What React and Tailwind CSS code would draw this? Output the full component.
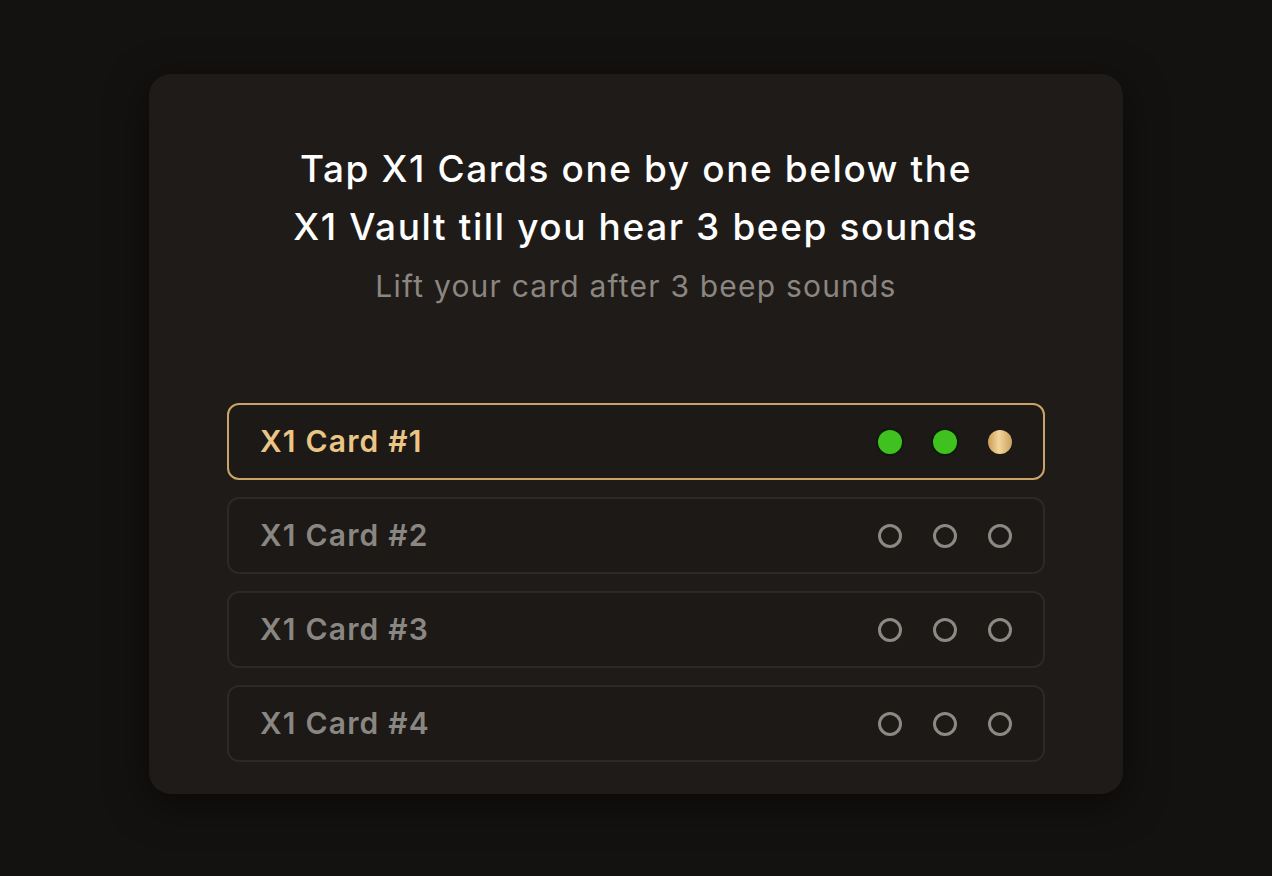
export default function App() {
  const cards = [
    { name: "X1 Card #1", active: true, dots: ["green", "green", "gold"] },
    { name: "X1 Card #2", active: false, dots: ["empty", "empty", "empty"] },
    { name: "X1 Card #3", active: false, dots: ["empty", "empty", "empty"] },
    { name: "X1 Card #4", active: false, dots: ["empty", "empty", "empty"] },
  ];

  const Dot = ({ kind }) => {
    if (kind === "green")
      return <span className="block h-[24px] w-[24px] rounded-full bg-[#3fc21f] shadow-[0_0_0_2px_#0f1a0a]" />;
    if (kind === "gold")
      return <span className="block h-[24px] w-[24px] rounded-full bg-[linear-gradient(90deg,#c99b55,#f3d59a_45%,#caa060)]" />;
    return <span className="block h-[24px] w-[24px] rounded-full border-[3px] border-[#8c8884]" />;
  };

  return (
    <div className="flex min-h-[876px] w-full items-start justify-center bg-[#141210] pt-[74px] font-['Inter',sans-serif]">
      <div className="flex h-[720px] w-[974px] flex-col items-center rounded-[22px] bg-[#1f1b18] shadow-[0_10px_40px_rgba(0,0,0,0.5)]">
        <div className="mt-[66px] flex flex-col items-center text-center">
          <p className="text-[37px] font-medium leading-[58px] tracking-[1.6px] text-white">
            Tap X1 Cards one by one below the
            <br />
            X1 Vault till you hear 3 beep sounds
          </p>
          <p className="mt-[10px] text-[30px] leading-[40px] tracking-[1.2px] text-[#8b8680]">
            Lift your card after 3 beep sounds
          </p>
        </div>
        <div className="mt-[97px] flex w-[818px] flex-col gap-[17px]">
          {cards.map((c) => (
            <div
              key={c.name}
              className={
                c.active
                  ? "flex h-[77px] items-center justify-between rounded-[12px] border-2 border-[#c9a466] bg-[#1c1916] pl-[31px] pr-[31px]"
                  : "flex h-[77px] items-center justify-between rounded-[12px] border-2 border-[#2c2926] bg-[#1c1916] pl-[31px] pr-[31px]"
              }
            >
              <span
                className={
                  c.active
                    ? "text-[30px] font-semibold tracking-[1.2px] text-[#ebc586]"
                    : "text-[30px] font-semibold tracking-[1.2px] text-[#8a8682]"
                }
              >
                {c.name}
              </span>
              <div className="flex items-center gap-[31px]">
                {c.dots.map((d, i) => (
                  <Dot key={i} kind={d} />
                ))}
              </div>
            </div>
          ))}
        </div>
      </div>
    </div>
  );
}
